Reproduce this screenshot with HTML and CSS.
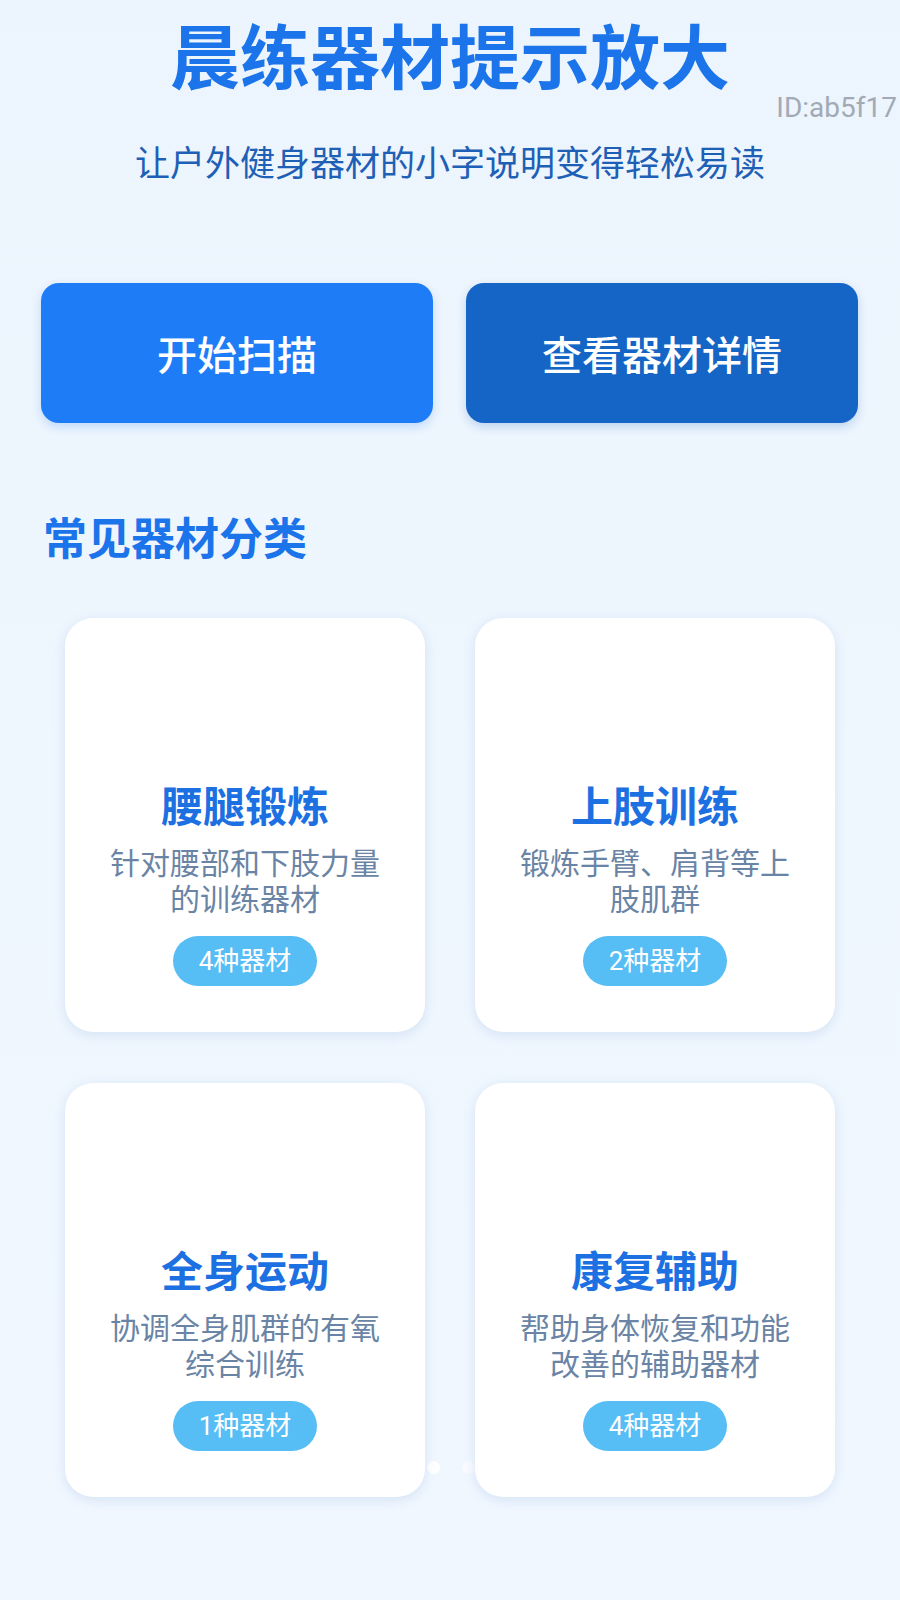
FILE: index.html
```html
<!DOCTYPE html>
<html lang="zh-CN">
<head>
<meta charset="utf-8">
<title>晨练器材提示放大</title>
<link rel="stylesheet" href="styles.css">
</head>
<body>
<div class="page">
  <span class="page-id">ID:ab5f17</span>
  <h1 class="title">晨练器材提示放大</h1>
  <p class="subtitle">让户外健身器材的小字说明变得轻松易读</p>

  <div class="actions">
    <button class="btn btn-primary">开始扫描</button>
    <button class="btn btn-dark">查看器材详情</button>
  </div>

  <h2 class="section-title">常见器材分类</h2>

  <div class="cards">
    <div class="dots"><span class="dot dot-on"></span><span class="dot"></span></div>
    <div class="card">
      <div class="card-title">腰腿锻炼</div>
      <div class="card-desc">针对腰部和下肢力量的训练器材</div>
      <span class="badge">4种器材</span>
    </div>
    <div class="card">
      <div class="card-title">上肢训练</div>
      <div class="card-desc">锻炼手臂、肩背等上肢肌群</div>
      <span class="badge">2种器材</span>
    </div>
    <div class="card">
      <div class="card-title">全身运动</div>
      <div class="card-desc">协调全身肌群的有氧综合训练</div>
      <span class="badge">1种器材</span>
    </div>
    <div class="card">
      <div class="card-title">康复辅助</div>
      <div class="card-desc">帮助身体恢复和功能改善的辅助器材</div>
      <span class="badge">4种器材</span>
    </div>
  </div>
</div>
</body>
</html>
```

FILE: styles.css
```css
* {
  box-sizing: border-box;
}

html, body {
  margin: 0;
  padding: 0;
}

body {
  width: 900px;
  min-height: 1600px;
  background: linear-gradient(180deg, #ecf4fd 0%, #eef6fe 50%, #f0f7ff 100%);
  font-family: "Noto Sans CJK SC", "Noto Sans", sans-serif;
}

.page {
  position: relative;
  padding-top: 12px;
  padding-bottom: 40px;
}

.page-id {
  position: absolute;
  top: 91px;
  right: 3px;
  font-family: Roboto, "Liberation Sans", sans-serif;
  font-size: 28px;
  line-height: 33px;
  color: #a2aab5;
}

.title {
  margin: 0;
  text-align: center;
  font-size: 70px;
  line-height: 84px;
  font-weight: 700;
  color: #1b74ea;
}

.subtitle {
  margin: 44px 0 0;
  text-align: center;
  font-size: 35px;
  line-height: 42px;
  font-weight: 400;
  color: #1d60b6;
}

.actions {
  display: flex;
  gap: 33px;
  padding: 0 42px 0 41px;
  margin-top: 101px;
}

.btn {
  flex: 1;
  height: 140px;
  border: none;
  border-radius: 18px;
  font-family: "Noto Sans CJK SC", "Noto Sans", sans-serif;
  font-size: 40px;
  font-weight: 500;
  color: #ffffff;
  cursor: pointer;
}

.btn-primary {
  background: #1f7cf7;
  box-shadow: 0 4px 10px rgba(31, 124, 247, 0.22);
}

.btn-dark {
  background: #1565c6;
  box-shadow: 0 4px 10px rgba(21, 101, 198, 0.22);
}

.section-title {
  margin: 87px 0 0 43px;
  font-size: 44px;
  line-height: 53px;
  font-weight: 700;
  color: #1b74ea;
}

.cards {
  position: relative;
  display: grid;
  grid-template-columns: 360px 360px;
  column-gap: 50px;
  row-gap: 51px;
  padding: 0 65px;
  margin-top: 55px;
}

.dots {
  position: absolute;
  left: 427px;
  top: 843px;
  display: flex;
  gap: 22px;
  z-index: 0;
}

.dot {
  width: 13px;
  height: 13px;
  border-radius: 50%;
  background: rgba(255, 255, 255, 0.55);
}

.dot-on {
  background: #ffffff;
}

.card {
  position: relative;
  z-index: 1;
  height: 414px;
  background: #ffffff;
  border-radius: 28px;
  box-shadow: 0 3px 12px rgba(110, 150, 200, 0.2);
  display: flex;
  flex-direction: column;
  align-items: center;
  justify-content: flex-end;
  padding: 0 40px 46px;
  text-align: center;
}

.card-title {
  font-size: 42px;
  line-height: 48px;
  font-weight: 700;
  color: #1c70e2;
}

.card-desc {
  margin-top: 15px;
  font-size: 30px;
  line-height: 36px;
  color: #6a84a5;
}

.badge {
  margin-top: 21px;
  height: 50px;
  padding: 0 26px;
  border-radius: 25px;
  background: #57bdf5;
  color: #ffffff;
  font-family: Roboto, "Noto Sans CJK SC", sans-serif;
  font-size: 26px;
  line-height: 50px;
}
```
